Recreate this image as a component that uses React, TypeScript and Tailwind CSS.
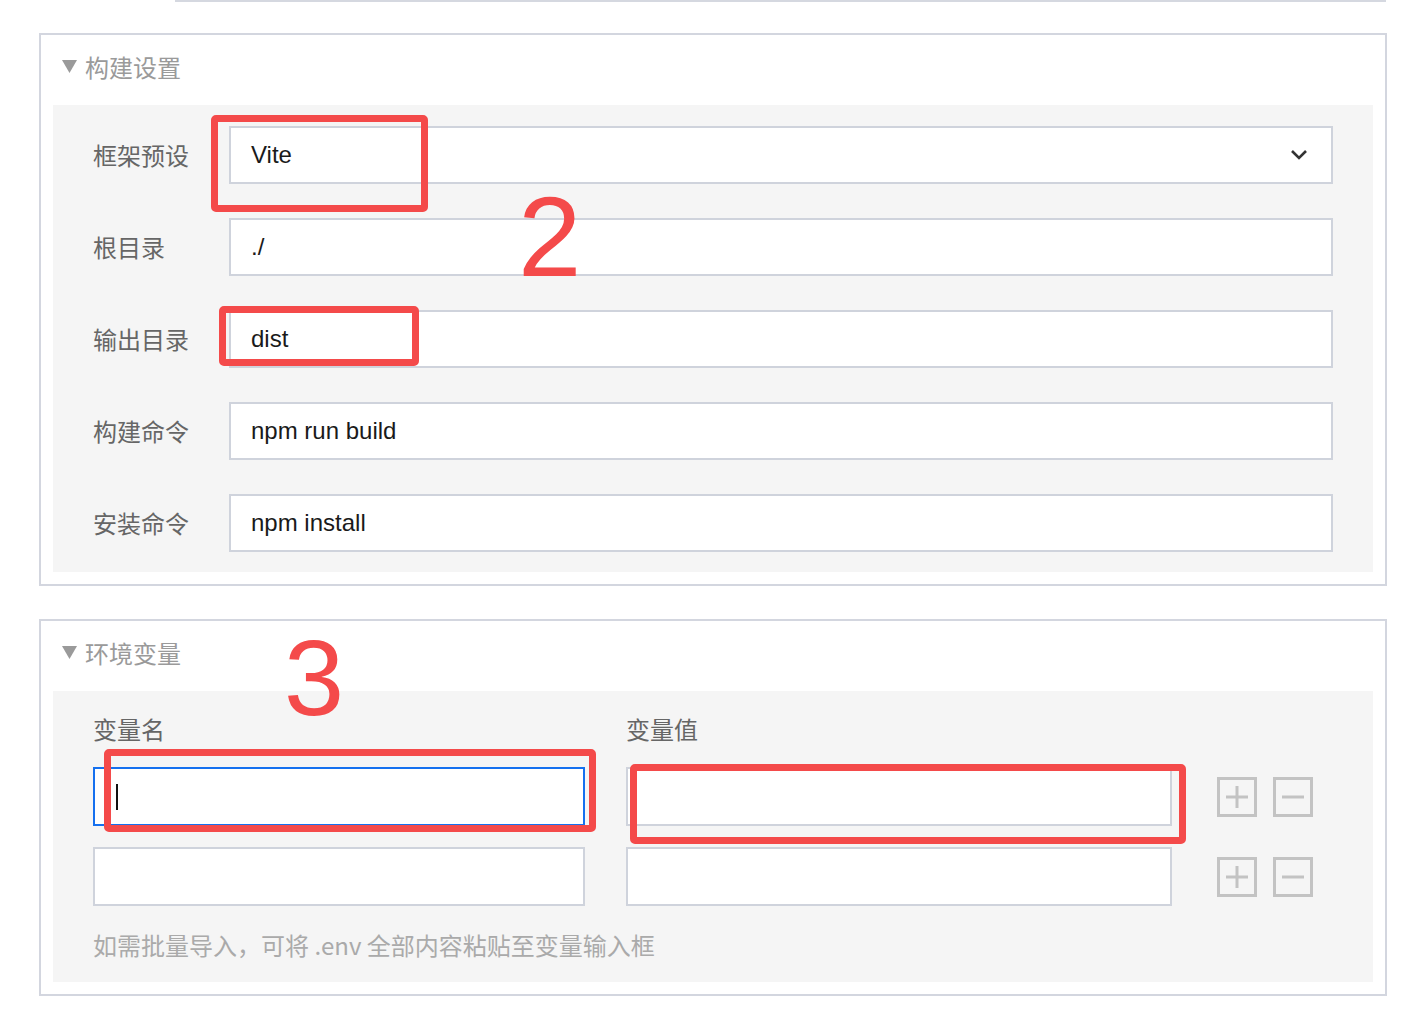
import React from 'react';

const cn = '"Noto Sans CJK SC", "Liberation Sans", sans-serif';
const latin = '"Liberation Sans", "Noto Sans CJK SC", sans-serif';

function Caret() {
  return (
    <svg width="15" height="13" viewBox="0 0 15 13" className="mr-[8px]">
      <path d="M0 0 L15 0 L7.5 13 Z" fill="#9a9a9a" />
    </svg>
  );
}

function SectionTitle({ text }: { text: string }) {
  return (
    <div className="h-[70px] pl-[21px] pb-[7px] flex items-center">
      <Caret />
      <span className="text-[24px] text-[#9a9a9a] leading-none" style={{ fontFamily: cn }}>{text}</span>
    </div>
  );
}

function FieldRow({ label, value, select }: { label: string; value: string; select?: boolean }) {
  return (
    <div className="flex items-center h-[58px]">
      <div className="w-[136px] shrink-0 text-[24px] text-[#666]" style={{ fontFamily: cn }}>{label}</div>
      <div className="flex-1 h-[58px] bg-white border-2 border-[#cfd3dc] flex items-center pl-[20px] pr-[23px]">
        <span className="flex-1 text-[24px] text-[#1a1a1a]" style={{ fontFamily: latin }}>{value}</span>
        {select && (
          <svg width="18" height="12" viewBox="0 0 18 12">
            <path d="M2 2 L9 9 L16 2" fill="none" stroke="#333" strokeWidth="2.6" />
          </svg>
        )}
      </div>
    </div>
  );
}

function SquareBtn({ plus }: { plus?: boolean }) {
  return (
    <svg width="40" height="40" viewBox="0 0 40 40">
      <rect x="1.5" y="1.5" width="37" height="37" fill="none" stroke="#c3c3c3" strokeWidth="3" />
      <path d="M9 20 H31" stroke="#c3c3c3" strokeWidth="3" />
      {plus && <path d="M20 9 V31" stroke="#c3c3c3" strokeWidth="3" />}
    </svg>
  );
}

function EnvRow({ focused }: { focused?: boolean }) {
  return (
    <div className="flex items-center h-[59px]">
      <div
        className={
          focused
            ? 'w-[492px] h-[59px] bg-white border-2 border-[#1570ef] flex items-center pl-[21px]'
            : 'w-[492px] h-[59px] bg-white border-2 border-[#cfd3dc]'
        }
      >
        {focused && <div className="w-[2px] h-[26px] bg-[#111]" />}
      </div>
      <div className="ml-[41px] w-[546px] h-[59px] bg-white border-2 border-[#cfd3dc]" />
      <div className="ml-[45px] flex gap-[16px]">
        <SquareBtn plus />
        <SquareBtn />
      </div>
    </div>
  );
}

function Mark({ className }: { className: string }) {
  return <div className={'absolute border-[7px] border-[#f44a4a] rounded-[5px] ' + className} />;
}

export default function App() {
  return (
    <div className="relative w-[1426px] h-[1020px] bg-white overflow-hidden">
      <div className="ml-[175px] w-[1211px] h-[2px] bg-[#d5d8e0]" />

      <div className="px-[39px] pt-[31px]">
        {/* build settings */}
        <div className="border-2 border-[#d3d6df] bg-white">
          <SectionTitle text="构建设置" />
          <div className="mx-[12px] mb-[12px] bg-[#f5f5f5] pt-[21px] pb-[20px] pl-[40px] pr-[40px] flex flex-col gap-[34px]">
            <FieldRow label="框架预设" value="Vite" select />
            <FieldRow label="根目录" value="./" />
            <FieldRow label="输出目录" value="dist" />
            <FieldRow label="构建命令" value="npm run build" />
            <FieldRow label="安装命令" value="npm install" />
          </div>
        </div>

        {/* env variables */}
        <div className="mt-[33px] border-2 border-[#d3d6df] bg-white">
          <SectionTitle text="环境变量" />
          <div className="mx-[12px] mb-[12px] bg-[#f5f5f5] pt-[22px] pb-[22px] pl-[40px]">
            <div className="flex h-[32px] items-center text-[24px] text-[#666]" style={{ fontFamily: cn }}>
              <span className="w-[533px]">变量名</span>
              <span>变量值</span>
            </div>
            <div className="mt-[22px] flex flex-col gap-[21px]">
              <EnvRow focused />
              <EnvRow />
            </div>
            <div className="mt-[24px] h-[30px] flex items-center text-[24px] text-[#aaa]" style={{ fontFamily: cn }}>
              如需批量导入，可将 .env 全部内容粘贴至变量输入框
            </div>
          </div>
        </div>
      </div>

      {/* red callouts */}
      <Mark className="left-[211px] top-[115px] w-[217px] h-[97px]" />
      <Mark className="left-[219px] top-[306px] w-[200px] h-[60px]" />
      <Mark className="left-[104px] top-[749px] w-[492px] h-[83px]" />
      <Mark className="left-[630px] top-[764px] w-[556px] h-[80px]" />
      <div className="absolute left-[518px] top-[180px] text-[114px] leading-none text-[#f44a4a]" style={{ fontFamily: latin }}>2</div>
      <div className="absolute left-[284px] top-[624px] text-[108px] leading-none text-[#f44a4a]" style={{ fontFamily: latin }}>3</div>
    </div>
  );
}
